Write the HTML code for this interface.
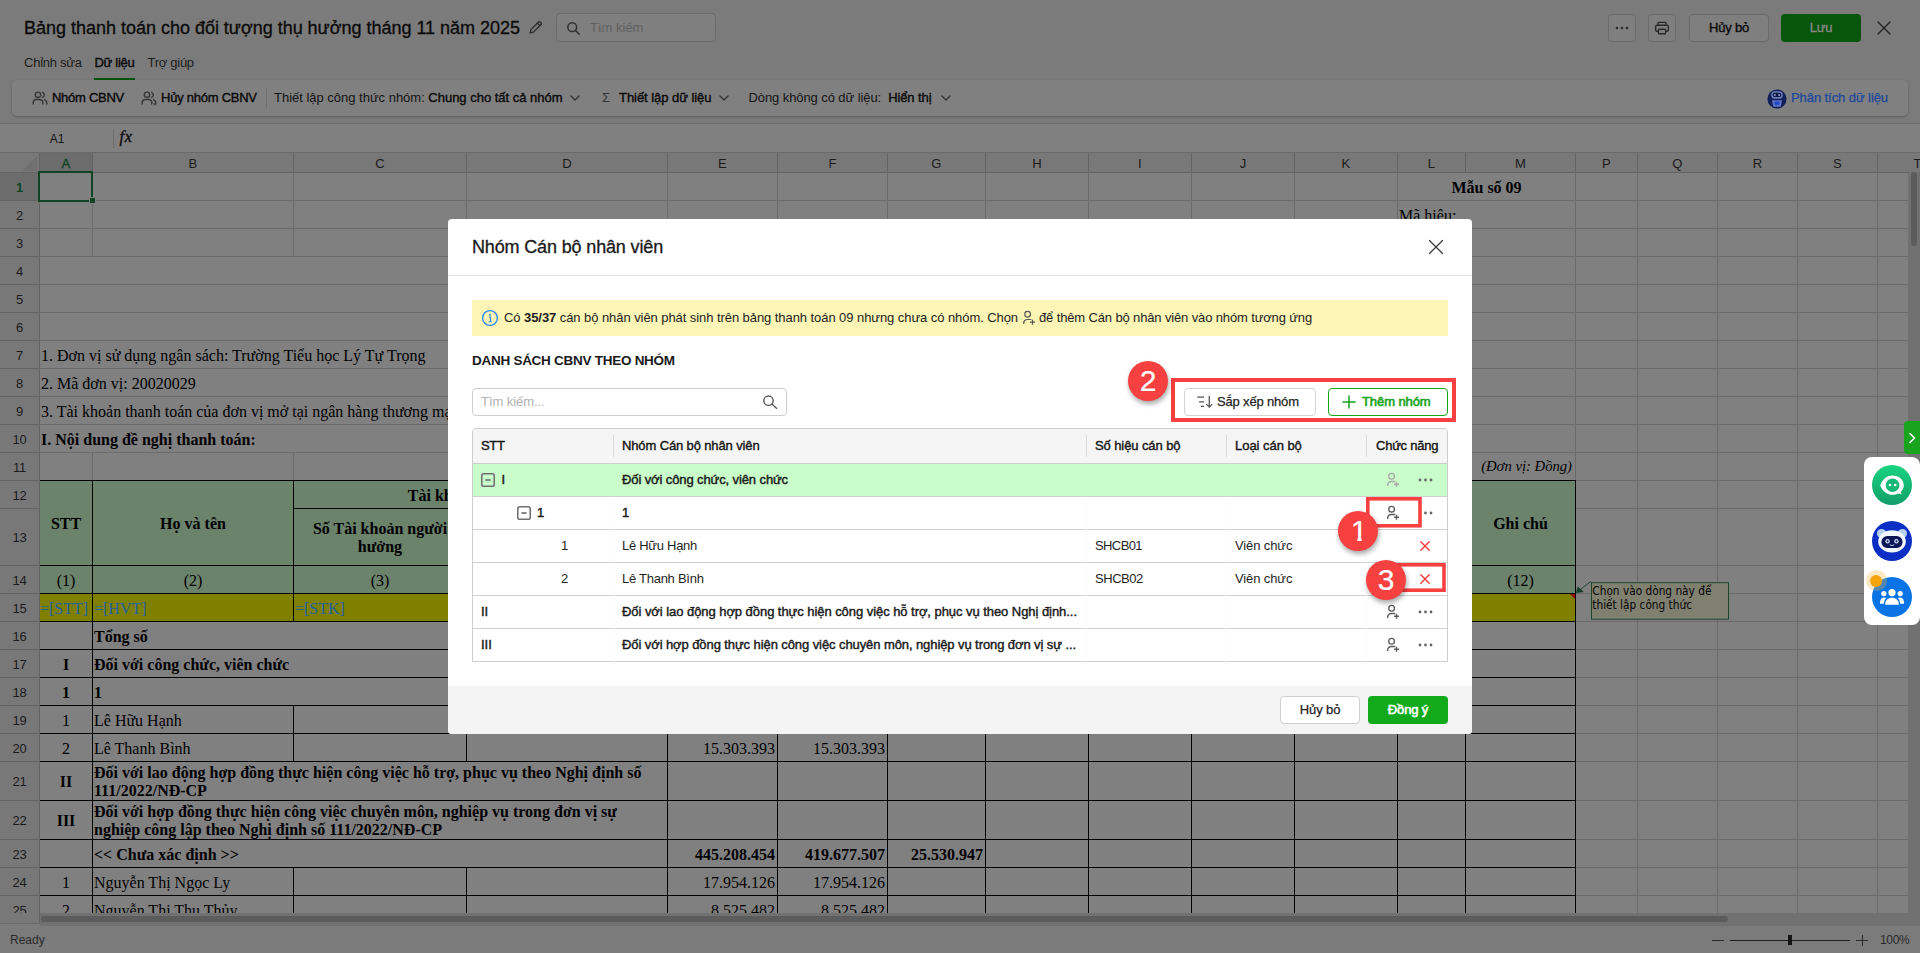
<!DOCTYPE html>
<html lang="vi"><head><meta charset="utf-8"><title>Bảng thanh toán</title><style>
html,body{margin:0;padding:0;}
body{width:1920px;height:953px;overflow:hidden;background:#7b7b7b;font-family:"Liberation Sans",sans-serif;position:relative;}
div,svg{position:absolute;}
.a{position:absolute;}
.t{position:absolute;white-space:nowrap;}
span,i,b{position:static;}
</style></head><body>
<div class="t" id="title" style="left:24px;top:16px;font-size:18px;line-height:24px;color:#0a0a0a;-webkit-text-stroke:0.3px #0a0a0a;letter-spacing:-0.013px;">Bảng thanh toán cho đối tượng thụ hưởng tháng 11 năm 2025</div>
<svg class="a" style="left:528px;top:19px" width="16" height="16" viewBox="0 0 16 16" fill="none" stroke="#2b2b2b" stroke-width="1.3" stroke-linejoin="round" stroke-linecap="round"><path d="M2.2 13.8l.7-3.2 7.6-7.6a1.2 1.2 0 0 1 1.7 0l.8.8a1.2 1.2 0 0 1 0 1.7l-7.6 7.6z"/><path d="M9.4 4.1l2.5 2.5"/></svg>
<div style="left:556px;top:13px;width:158px;height:27px;border:1px solid #6b6b6b;border-radius:4px;background:#7f7f7f;"></div>
<svg class="a" style="left:566px;top:20.5px" width="15" height="15" viewBox="0 0 15 15" fill="none" stroke="#2f2f2f" stroke-width="1.5" stroke-linecap="round"><circle cx="6.2" cy="6.2" r="4.4"/><path d="M9.6 9.6l3.6 3.6"/></svg>
<div class="t" id="srch" style="left:590px;top:20px;font-size:13px;line-height:16px;color:#616161;">Tìm kiếm</div>
<div class="t" id="tab1" style="left:24px;top:55px;font-size:13px;line-height:16px;color:#1c1c1c;letter-spacing:-0.246px;">Chỉnh sửa</div>
<div class="t" id="tab2" style="left:94.5px;top:55px;font-size:13px;line-height:16px;color:#0a0a0a;-webkit-text-stroke:0.38px #0a0a0a;letter-spacing:-0.279px;">Dữ liệu</div>
<div class="t" id="tab3" style="left:147.5px;top:55px;font-size:13px;line-height:16px;color:#1c1c1c;letter-spacing:-0.277px;">Trợ giúp</div>
<div style="left:94px;top:78px;width:41px;height:2px;background:#07550b;"></div>
<div style="left:1608px;top:14px;width:26px;height:26px;border:1px solid #6b6b6b;border-radius:4px;background:#7f7f7f;"></div>
<svg class="a" style="left:1614px;top:25px" width="16" height="6" viewBox="0 0 16 6" fill="#2b2b2b"><circle cx="3" cy="3" r="1.3"/><circle cx="8" cy="3" r="1.3"/><circle cx="13" cy="3" r="1.3"/></svg>
<div style="left:1648px;top:14px;width:26px;height:26px;border:1px solid #6b6b6b;border-radius:4px;background:#7f7f7f;"></div>
<svg class="a" style="left:1654px;top:20px" width="16" height="16" viewBox="0 0 16 16" fill="none" stroke="#2b2b2b" stroke-width="1.4" stroke-linejoin="round"><path d="M4.2 5.2V2.4h7.6v2.8"/><rect x="1.6" y="5.2" width="12.8" height="6.2" rx="1.6"/><rect x="4.4" y="9.2" width="7.2" height="4.6" rx="0.8" fill="#7f7f7f"/></svg>
<div style="left:1689px;top:14px;width:78px;height:26px;border:1px solid #6b6b6b;border-radius:4px;background:#7f7f7f;"></div>
<div class="t" id="huy1" style="left:1689px;top:20px;width:80px;text-align:center;font-size:13px;line-height:16px;color:#0a0a0a;-webkit-text-stroke:0.38px #0a0a0a;letter-spacing:-0.201px;">Hủy bỏ</div>
<div style="left:1781px;top:14px;width:80px;height:28px;border-radius:4px;background:#08550c;"></div>
<div class="t" id="luu" style="left:1781px;top:20px;width:80px;text-align:center;font-size:13px;line-height:16px;color:#8a8a8a;-webkit-text-stroke:0.3px #8a8a8a;letter-spacing:-0.291px;">Lưu</div>
<svg class="a" style="left:1876px;top:20px" width="16" height="16" viewBox="0 0 16 16" fill="none" stroke="#222" stroke-width="1.4" stroke-linecap="round"><path d="M2 2l12 12M14 2L2 14"/></svg>
<div style="left:12px;top:80px;width:1896px;height:36px;background:#808080;border-radius:5px;box-shadow:0 1px 3px rgba(0,0,0,0.22);"></div>
<svg class="a" style="left:32px;top:90px" width="16" height="16" viewBox="0 0 16 16" fill="none" stroke="#383838" stroke-width="1.45" stroke-linecap="round"><circle cx="6" cy="4.8" r="2.7"/><path d="M1.2 14v-1.2c0-2 1.6-3.4 3.6-3.4h2.4c2 0 3.6 1.4 3.6 3.4V14"/><path d="M10.6 2.3a2.7 2.7 0 0 1 0 5"/><path d="M12.6 9.8c1.3.5 2.2 1.6 2.2 3V14"/></svg>
<div class="t" id="tb1" style="left:52px;top:90px;font-size:13px;line-height:16px;color:#0a0a0a;-webkit-text-stroke:0.38px #0a0a0a;letter-spacing:-0.269px;">Nhóm CBNV</div>
<svg class="a" style="left:141px;top:90px" width="16" height="16" viewBox="0 0 16 16" fill="none" stroke="#383838" stroke-width="1.45" stroke-linecap="round"><circle cx="6" cy="4.8" r="2.7"/><path d="M1.2 14v-1.2c0-2 1.6-3.4 3.6-3.4h2.4c2 0 3.6 1.4 3.6 3.4V14"/><path d="M10.6 2.3a2.7 2.7 0 0 1 0 5"/><path d="M12.6 9.8c1.3.5 2.2 1.6 2.2 3V14"/><path d="M12.8 13.2l2 2M14.8 13.2l-2 2" stroke-width="1"/></svg>
<div class="t" id="tb2" style="left:161px;top:90px;font-size:13px;line-height:16px;color:#0a0a0a;-webkit-text-stroke:0.38px #0a0a0a;letter-spacing:-0.245px;">Hủy nhóm CBNV</div>
<div style="left:266px;top:88px;width:1px;height:21px;background:#727272;"></div>
<div class="t" id="tb3" style="left:274px;top:90px;font-size:13px;line-height:16px;color:#141414;letter-spacing:-0.013px;">Thiết lập công thức nhóm: <span style="-webkit-text-stroke:0.38px #0a0a0a;color:#0a0a0a">Chung cho tất cả nhóm</span></div>
<svg class="a" style="left:569px;top:93px" width="12" height="10" viewBox="0 0 12 10" fill="none" stroke="#333" stroke-width="1.3" stroke-linecap="round" stroke-linejoin="round"><path d="M2 3l4 4 4-4"/></svg>
<div class="t" style="left:602px;top:90px;font-size:13px;line-height:16px;color:#333;">Σ</div>
<div class="t" id="tb4" style="left:619px;top:90px;font-size:13px;line-height:16px;color:#0a0a0a;-webkit-text-stroke:0.38px #0a0a0a;letter-spacing:-0.045px;">Thiết lập dữ liệu</div>
<svg class="a" style="left:718px;top:93px" width="12" height="10" viewBox="0 0 12 10" fill="none" stroke="#333" stroke-width="1.3" stroke-linecap="round" stroke-linejoin="round"><path d="M2 3l4 4 4-4"/></svg>
<div class="t" id="tb5" style="left:748.5px;top:90px;font-size:13px;line-height:16px;color:#141414;letter-spacing:-0.086px;">Dòng không có dữ liệu:&nbsp; <span style="-webkit-text-stroke:0.38px #0a0a0a;color:#0a0a0a">Hiển thị</span></div>
<svg class="a" style="left:940px;top:93px" width="12" height="10" viewBox="0 0 12 10" fill="none" stroke="#333" stroke-width="1.3" stroke-linecap="round" stroke-linejoin="round"><path d="M2 3l4 4 4-4"/></svg>
<svg class="a" style="left:1766px;top:88px" width="22" height="22" viewBox="0 0 22 22"><circle cx="11" cy="11" r="9.6" fill="#12205a"/><rect x="5.2" y="3.2" width="11.6" height="7.6" rx="3.6" fill="#6d7fb8"/><rect x="6.6" y="4.8" width="8.8" height="4.2" rx="2.1" fill="#101a4a"/><circle cx="8.9" cy="6.9" r="1" fill="#8a9ad0"/><circle cx="13.1" cy="6.9" r="1" fill="#8a9ad0"/><path d="M6 12.2h10l-1.2 6.6H7.2z" fill="#5d74c4"/><rect x="8.6" y="13.6" width="4.8" height="3.4" rx="1" fill="#1f49c8"/></svg>
<div class="t" id="pt" style="left:1791px;top:90px;font-size:13px;line-height:16px;color:#1b479c;-webkit-text-stroke:0.25px #1b479c;letter-spacing:-0.078px;">Phân tích dữ liệu</div>
<div style="left:0px;top:123px;width:1920px;height:30px;background:#808080;border-top:1px solid #6a6a6a;border-bottom:1px solid #6a6a6a;box-sizing:border-box;"></div>
<div class="t" id="a1" style="left:0px;top:131px;width:114px;text-align:center;font-size:12px;line-height:16px;color:#141414;">A1</div>
<div style="left:113px;top:129px;width:1px;height:19px;background:#6e6e6e;"></div>
<div class="t" id="fx" style="left:119.5px;top:127px;font-family:'Liberation Serif',serif;font-size:16px;line-height:20px;color:#0c0c0c;-webkit-text-stroke:0.4px #0c0c0c;letter-spacing:0.8px;"><i>fx</i></div>
<div class="a" style="left:0;top:153px;width:1920px;height:760px;overflow:hidden;background:#808080">
<div style="left:0px;top:0px;width:1920px;height:19px;background:#787878;"></div>
<div style="left:0px;top:19px;width:39px;height:760px;background:#787878;"></div>
<div style="left:40px;top:0px;width:52px;height:19px;background:#6c6c6c;"></div>
<div style="left:0px;top:20px;width:39px;height:27px;background:#6c6c6c;"></div>
<svg class="a" style="left:22px;top:3px" width="15" height="15" viewBox="0 0 15 15"><path d="M15 0V15H0z" fill="#707070"/></svg>
<div style="left:40px;top:328px;width:1535px;height:112px;background:#6b826b;"></div>
<div style="left:40px;top:441px;width:1535px;height:27px;background:#808000;"></div>
<div style="left:0px;top:19px;width:39px;height:1px;background:#636363;"></div>
<div style="left:39px;top:19px;width:1900px;height:1px;background:#636363;"></div>
<div style="left:0px;top:47px;width:39px;height:1px;background:#636363;"></div>
<div style="left:39px;top:47px;width:1900px;height:1px;background:#6b6b6b;"></div>
<div style="left:0px;top:75px;width:39px;height:1px;background:#636363;"></div>
<div style="left:39px;top:75px;width:1900px;height:1px;background:#6b6b6b;"></div>
<div style="left:0px;top:103px;width:39px;height:1px;background:#636363;"></div>
<div style="left:39px;top:103px;width:1900px;height:1px;background:#6b6b6b;"></div>
<div style="left:0px;top:131px;width:39px;height:1px;background:#636363;"></div>
<div style="left:39px;top:131px;width:1900px;height:1px;background:#6b6b6b;"></div>
<div style="left:0px;top:159px;width:39px;height:1px;background:#636363;"></div>
<div style="left:39px;top:159px;width:1900px;height:1px;background:#6b6b6b;"></div>
<div style="left:0px;top:187px;width:39px;height:1px;background:#636363;"></div>
<div style="left:39px;top:187px;width:1900px;height:1px;background:#6b6b6b;"></div>
<div style="left:0px;top:215px;width:39px;height:1px;background:#636363;"></div>
<div style="left:39px;top:215px;width:1900px;height:1px;background:#6b6b6b;"></div>
<div style="left:0px;top:243px;width:39px;height:1px;background:#636363;"></div>
<div style="left:39px;top:243px;width:1900px;height:1px;background:#6b6b6b;"></div>
<div style="left:0px;top:271px;width:39px;height:1px;background:#636363;"></div>
<div style="left:39px;top:271px;width:1900px;height:1px;background:#6b6b6b;"></div>
<div style="left:0px;top:299px;width:39px;height:1px;background:#636363;"></div>
<div style="left:39px;top:299px;width:1900px;height:1px;background:#6b6b6b;"></div>
<div style="left:0px;top:327px;width:39px;height:1px;background:#636363;"></div>
<div style="left:39px;top:327px;width:1900px;height:1px;background:#6b6b6b;"></div>
<div style="left:0px;top:355px;width:39px;height:1px;background:#636363;"></div>
<div style="left:1575px;top:355px;width:400px;height:1px;background:#6b6b6b;"></div>
<div style="left:0px;top:412px;width:39px;height:1px;background:#636363;"></div>
<div style="left:39px;top:412px;width:1900px;height:1px;background:#6b6b6b;"></div>
<div style="left:0px;top:440px;width:39px;height:1px;background:#636363;"></div>
<div style="left:39px;top:440px;width:1900px;height:1px;background:#6b6b6b;"></div>
<div style="left:0px;top:468px;width:39px;height:1px;background:#636363;"></div>
<div style="left:39px;top:468px;width:1900px;height:1px;background:#6b6b6b;"></div>
<div style="left:0px;top:496px;width:39px;height:1px;background:#636363;"></div>
<div style="left:39px;top:496px;width:1900px;height:1px;background:#6b6b6b;"></div>
<div style="left:0px;top:524px;width:39px;height:1px;background:#636363;"></div>
<div style="left:39px;top:524px;width:1900px;height:1px;background:#6b6b6b;"></div>
<div style="left:0px;top:552px;width:39px;height:1px;background:#636363;"></div>
<div style="left:39px;top:552px;width:1900px;height:1px;background:#6b6b6b;"></div>
<div style="left:0px;top:580px;width:39px;height:1px;background:#636363;"></div>
<div style="left:39px;top:580px;width:1900px;height:1px;background:#6b6b6b;"></div>
<div style="left:0px;top:608px;width:39px;height:1px;background:#636363;"></div>
<div style="left:39px;top:608px;width:1900px;height:1px;background:#6b6b6b;"></div>
<div style="left:0px;top:647px;width:39px;height:1px;background:#636363;"></div>
<div style="left:39px;top:647px;width:1900px;height:1px;background:#6b6b6b;"></div>
<div style="left:0px;top:686px;width:39px;height:1px;background:#636363;"></div>
<div style="left:39px;top:686px;width:1900px;height:1px;background:#6b6b6b;"></div>
<div style="left:0px;top:714px;width:39px;height:1px;background:#636363;"></div>
<div style="left:39px;top:714px;width:1900px;height:1px;background:#6b6b6b;"></div>
<div style="left:0px;top:742px;width:39px;height:1px;background:#636363;"></div>
<div style="left:39px;top:742px;width:1900px;height:1px;background:#6b6b6b;"></div>
<div style="left:0px;top:770px;width:39px;height:1px;background:#636363;"></div>
<div style="left:39px;top:770px;width:1900px;height:1px;background:#6b6b6b;"></div>
<div style="left:39px;top:0px;width:1px;height:19px;background:#636363;"></div>
<div style="left:92px;top:0px;width:1px;height:19px;background:#636363;"></div>
<div style="left:293px;top:0px;width:1px;height:19px;background:#636363;"></div>
<div style="left:466px;top:0px;width:1px;height:19px;background:#636363;"></div>
<div style="left:667px;top:0px;width:1px;height:19px;background:#636363;"></div>
<div style="left:777px;top:0px;width:1px;height:19px;background:#636363;"></div>
<div style="left:887px;top:0px;width:1px;height:19px;background:#636363;"></div>
<div style="left:985px;top:0px;width:1px;height:19px;background:#636363;"></div>
<div style="left:1088px;top:0px;width:1px;height:19px;background:#636363;"></div>
<div style="left:1191px;top:0px;width:1px;height:19px;background:#636363;"></div>
<div style="left:1294px;top:0px;width:1px;height:19px;background:#636363;"></div>
<div style="left:1397px;top:0px;width:1px;height:19px;background:#636363;"></div>
<div style="left:1465px;top:0px;width:1px;height:19px;background:#636363;"></div>
<div style="left:1575px;top:0px;width:1px;height:19px;background:#636363;"></div>
<div style="left:1637px;top:0px;width:1px;height:19px;background:#636363;"></div>
<div style="left:1717px;top:0px;width:1px;height:19px;background:#636363;"></div>
<div style="left:1797px;top:0px;width:1px;height:19px;background:#636363;"></div>
<div style="left:1877px;top:0px;width:1px;height:19px;background:#636363;"></div>
<div style="left:39px;top:19px;width:1px;height:760px;background:#636363;"></div>
<div style="left:1575px;top:19px;width:1px;height:760px;background:#6b6b6b;"></div>
<div style="left:1637px;top:19px;width:1px;height:760px;background:#6b6b6b;"></div>
<div style="left:1717px;top:19px;width:1px;height:760px;background:#6b6b6b;"></div>
<div style="left:1797px;top:19px;width:1px;height:760px;background:#6b6b6b;"></div>
<div style="left:1877px;top:19px;width:1px;height:760px;background:#6b6b6b;"></div>
<div style="left:92px;top:19px;width:1px;height:84px;background:#6b6b6b;"></div>
<div style="left:293px;top:19px;width:1px;height:84px;background:#6b6b6b;"></div>
<div style="left:466px;top:19px;width:1px;height:84px;background:#6b6b6b;"></div>
<div style="left:667px;top:19px;width:1px;height:84px;background:#6b6b6b;"></div>
<div style="left:777px;top:19px;width:1px;height:84px;background:#6b6b6b;"></div>
<div style="left:887px;top:19px;width:1px;height:84px;background:#6b6b6b;"></div>
<div style="left:985px;top:19px;width:1px;height:84px;background:#6b6b6b;"></div>
<div style="left:1088px;top:19px;width:1px;height:84px;background:#6b6b6b;"></div>
<div style="left:1191px;top:19px;width:1px;height:84px;background:#6b6b6b;"></div>
<div style="left:1294px;top:19px;width:1px;height:84px;background:#6b6b6b;"></div>
<div style="left:1397px;top:19px;width:1px;height:84px;background:#6b6b6b;"></div>
<div style="left:1397px;top:19px;width:1px;height:56px;background:#6b6b6b;"></div>
<div style="left:92px;top:299px;width:1px;height:28px;background:#6b6b6b;"></div>
<div style="left:293px;top:299px;width:1px;height:28px;background:#6b6b6b;"></div>
<div class="t" id="colA" style="left:39.4px;top:3px;width:53px;text-align:center;font-size:13px;line-height:16px;color:#1b1b1b;color:#0f4525;-webkit-text-stroke:0.4px #0f4525;">A</div>
<div class="t" id="colB" style="left:92.4px;top:3px;width:201px;text-align:center;font-size:13px;line-height:16px;color:#1b1b1b;">B</div>
<div class="t" style="left:293.4px;top:3px;width:173px;text-align:center;font-size:13px;line-height:16px;color:#1b1b1b;">C</div>
<div class="t" style="left:466.4px;top:3px;width:201px;text-align:center;font-size:13px;line-height:16px;color:#1b1b1b;">D</div>
<div class="t" style="left:667.4px;top:3px;width:110px;text-align:center;font-size:13px;line-height:16px;color:#1b1b1b;">E</div>
<div class="t" style="left:777.4px;top:3px;width:110px;text-align:center;font-size:13px;line-height:16px;color:#1b1b1b;">F</div>
<div class="t" style="left:887.4px;top:3px;width:98px;text-align:center;font-size:13px;line-height:16px;color:#1b1b1b;">G</div>
<div class="t" style="left:985.4px;top:3px;width:103px;text-align:center;font-size:13px;line-height:16px;color:#1b1b1b;">H</div>
<div class="t" style="left:1088.4px;top:3px;width:103px;text-align:center;font-size:13px;line-height:16px;color:#1b1b1b;">I</div>
<div class="t" style="left:1191.4px;top:3px;width:103px;text-align:center;font-size:13px;line-height:16px;color:#1b1b1b;">J</div>
<div class="t" style="left:1294.4px;top:3px;width:103px;text-align:center;font-size:13px;line-height:16px;color:#1b1b1b;">K</div>
<div class="t" style="left:1397.4px;top:3px;width:68px;text-align:center;font-size:13px;line-height:16px;color:#1b1b1b;">L</div>
<div class="t" style="left:1465.4px;top:3px;width:110px;text-align:center;font-size:13px;line-height:16px;color:#1b1b1b;">M</div>
<div class="t" style="left:1575.4px;top:3px;width:62px;text-align:center;font-size:13px;line-height:16px;color:#1b1b1b;">P</div>
<div class="t" style="left:1637.4px;top:3px;width:80px;text-align:center;font-size:13px;line-height:16px;color:#1b1b1b;">Q</div>
<div class="t" style="left:1717.4px;top:3px;width:80px;text-align:center;font-size:13px;line-height:16px;color:#1b1b1b;">R</div>
<div class="t" style="left:1797.4px;top:3px;width:80px;text-align:center;font-size:13px;line-height:16px;color:#1b1b1b;">S</div>
<div class="t" id="colT" style="left:1877.4px;top:3px;width:80px;text-align:center;font-size:13px;line-height:16px;color:#1b1b1b;">T</div>
<div class="t" id="rn1" style="left:0px;top:26.5px;width:39px;text-align:center;font-size:13px;line-height:16px;color:#1b1b1b;letter-spacing:-0.2px;color:#0f4525;font-weight:bold;">1</div>
<div class="t" style="left:0px;top:54.5px;width:39px;text-align:center;font-size:13px;line-height:16px;color:#1b1b1b;letter-spacing:-0.2px;">2</div>
<div class="t" style="left:0px;top:82.5px;width:39px;text-align:center;font-size:13px;line-height:16px;color:#1b1b1b;letter-spacing:-0.2px;">3</div>
<div class="t" style="left:0px;top:110.5px;width:39px;text-align:center;font-size:13px;line-height:16px;color:#1b1b1b;letter-spacing:-0.2px;">4</div>
<div class="t" style="left:0px;top:138.5px;width:39px;text-align:center;font-size:13px;line-height:16px;color:#1b1b1b;letter-spacing:-0.2px;">5</div>
<div class="t" style="left:0px;top:166.5px;width:39px;text-align:center;font-size:13px;line-height:16px;color:#1b1b1b;letter-spacing:-0.2px;">6</div>
<div class="t" style="left:0px;top:194.5px;width:39px;text-align:center;font-size:13px;line-height:16px;color:#1b1b1b;letter-spacing:-0.2px;">7</div>
<div class="t" style="left:0px;top:222.5px;width:39px;text-align:center;font-size:13px;line-height:16px;color:#1b1b1b;letter-spacing:-0.2px;">8</div>
<div class="t" style="left:0px;top:250.5px;width:39px;text-align:center;font-size:13px;line-height:16px;color:#1b1b1b;letter-spacing:-0.2px;">9</div>
<div class="t" style="left:0px;top:278.5px;width:39px;text-align:center;font-size:13px;line-height:16px;color:#1b1b1b;letter-spacing:-0.2px;">10</div>
<div class="t" style="left:0px;top:306.5px;width:39px;text-align:center;font-size:13px;line-height:16px;color:#1b1b1b;letter-spacing:-0.2px;">11</div>
<div class="t" style="left:0px;top:334.5px;width:39px;text-align:center;font-size:13px;line-height:16px;color:#1b1b1b;letter-spacing:-0.2px;">12</div>
<div class="t" id="rn13" style="left:0px;top:377.0px;width:39px;text-align:center;font-size:13px;line-height:16px;color:#1b1b1b;letter-spacing:-0.2px;">13</div>
<div class="t" style="left:0px;top:419.5px;width:39px;text-align:center;font-size:13px;line-height:16px;color:#1b1b1b;letter-spacing:-0.2px;">14</div>
<div class="t" style="left:0px;top:447.5px;width:39px;text-align:center;font-size:13px;line-height:16px;color:#1b1b1b;letter-spacing:-0.2px;">15</div>
<div class="t" style="left:0px;top:475.5px;width:39px;text-align:center;font-size:13px;line-height:16px;color:#1b1b1b;letter-spacing:-0.2px;">16</div>
<div class="t" style="left:0px;top:503.5px;width:39px;text-align:center;font-size:13px;line-height:16px;color:#1b1b1b;letter-spacing:-0.2px;">17</div>
<div class="t" style="left:0px;top:531.5px;width:39px;text-align:center;font-size:13px;line-height:16px;color:#1b1b1b;letter-spacing:-0.2px;">18</div>
<div class="t" style="left:0px;top:559.5px;width:39px;text-align:center;font-size:13px;line-height:16px;color:#1b1b1b;letter-spacing:-0.2px;">19</div>
<div class="t" style="left:0px;top:587.5px;width:39px;text-align:center;font-size:13px;line-height:16px;color:#1b1b1b;letter-spacing:-0.2px;">20</div>
<div class="t" style="left:0px;top:621.0px;width:39px;text-align:center;font-size:13px;line-height:16px;color:#1b1b1b;letter-spacing:-0.2px;">21</div>
<div class="t" style="left:0px;top:660.0px;width:39px;text-align:center;font-size:13px;line-height:16px;color:#1b1b1b;letter-spacing:-0.2px;">22</div>
<div class="t" style="left:0px;top:693.5px;width:39px;text-align:center;font-size:13px;line-height:16px;color:#1b1b1b;letter-spacing:-0.2px;">23</div>
<div class="t" style="left:0px;top:721.5px;width:39px;text-align:center;font-size:13px;line-height:16px;color:#1b1b1b;letter-spacing:-0.2px;">24</div>
<div class="t" id="rn25" style="left:0px;top:749.5px;width:39px;text-align:center;font-size:13px;line-height:16px;color:#1b1b1b;letter-spacing:-0.2px;">25</div>
<div style="left:40px;top:327px;width:1536px;height:1px;background:#000;"></div>
<div style="left:293px;top:355px;width:1172px;height:1px;background:#000;"></div>
<div style="left:40px;top:412px;width:1536px;height:1px;background:#000;"></div>
<div style="left:40px;top:440px;width:1536px;height:1px;background:#000;"></div>
<div style="left:40px;top:468px;width:1536px;height:1px;background:#000;"></div>
<div style="left:40px;top:496px;width:1536px;height:1px;background:#000;"></div>
<div style="left:40px;top:524px;width:1536px;height:1px;background:#000;"></div>
<div style="left:40px;top:552px;width:1536px;height:1px;background:#000;"></div>
<div style="left:40px;top:580px;width:1536px;height:1px;background:#000;"></div>
<div style="left:40px;top:608px;width:1536px;height:1px;background:#000;"></div>
<div style="left:40px;top:647px;width:1536px;height:1px;background:#000;"></div>
<div style="left:40px;top:686px;width:1536px;height:1px;background:#000;"></div>
<div style="left:40px;top:714px;width:1536px;height:1px;background:#000;"></div>
<div style="left:40px;top:742px;width:1536px;height:1px;background:#000;"></div>
<div style="left:40px;top:770px;width:1536px;height:1px;background:#000;"></div>
<div style="left:92px;top:327px;width:1px;height:460px;background:#000;"></div>
<div style="left:667px;top:327px;width:1px;height:460px;background:#000;"></div>
<div style="left:777px;top:327px;width:1px;height:460px;background:#000;"></div>
<div style="left:887px;top:327px;width:1px;height:460px;background:#000;"></div>
<div style="left:985px;top:327px;width:1px;height:460px;background:#000;"></div>
<div style="left:1088px;top:327px;width:1px;height:460px;background:#000;"></div>
<div style="left:1191px;top:327px;width:1px;height:460px;background:#000;"></div>
<div style="left:1294px;top:327px;width:1px;height:460px;background:#000;"></div>
<div style="left:1397px;top:327px;width:1px;height:460px;background:#000;"></div>
<div style="left:1465px;top:327px;width:1px;height:460px;background:#000;"></div>
<div style="left:1575px;top:327px;width:1px;height:460px;background:#000;"></div>
<div style="left:293px;top:327px;width:1px;height:141px;background:#000;"></div>
<div style="left:466px;top:355px;width:1px;height:113px;background:#000;"></div>
<div style="left:293px;top:552px;width:1px;height:56px;background:#000;"></div>
<div style="left:466px;top:552px;width:1px;height:56px;background:#000;"></div>
<div style="left:293px;top:714px;width:1px;height:63px;background:#000;"></div>
<div style="left:466px;top:714px;width:1px;height:63px;background:#000;"></div>
<div style="left:38px;top:18px;width:55px;height:31px;border:2px solid #0f4525;box-sizing:border-box;"></div>
<div style="left:90px;top:45px;width:5px;height:5px;background:#0f4525;border:1px solid #808080;box-sizing:content-box;margin:-1px;"></div>
<div class="a" id="mau" style="left:1398px;top:20px;width:177px;height:27px;display:flex;align-items:center;justify-content:center;"><span style="font-family:'Liberation Serif', serif;font-size:16px;line-height:18px;color:#000;white-space:nowrap;position:relative;top:1px;font-weight:bold;">Mẫu số 09</span></div>
<div class="a" id="mahieu" style="left:1398px;top:48px;width:177px;height:27px;display:flex;align-items:center;justify-content:flex-start;"><span style="font-family:'Liberation Serif', serif;font-size:16px;line-height:18px;color:#000;white-space:nowrap;position:relative;top:1px;padding-left:1px;">Mã hiệu:</span></div>
<div class="a" id="r7" style="left:40px;top:188px;width:1535px;height:27px;display:flex;align-items:center;justify-content:flex-start;"><span style="font-family:'Liberation Serif', serif;font-size:16px;line-height:18px;color:#000;white-space:nowrap;position:relative;top:1px;padding-left:1px;">1. Đơn vị sử dụng ngân sách: Trường Tiểu học Lý Tự Trọng</span></div>
<div class="a" id="r8" style="left:40px;top:216px;width:1535px;height:27px;display:flex;align-items:center;justify-content:flex-start;"><span style="font-family:'Liberation Serif', serif;font-size:16px;line-height:18px;color:#000;white-space:nowrap;position:relative;top:1px;padding-left:1px;">2. Mã đơn vị: 20020029</span></div>
<div class="a" id="r9" style="left:40px;top:244px;width:1535px;height:27px;display:flex;align-items:center;justify-content:flex-start;"><span style="font-family:'Liberation Serif', serif;font-size:16px;line-height:18px;color:#000;white-space:nowrap;position:relative;top:1px;padding-left:1px;">3. Tài khoản thanh toán của đơn vị mở tại ngân hàng thương mại:</span></div>
<div class="a" id="r10" style="left:40px;top:272px;width:1535px;height:27px;display:flex;align-items:center;justify-content:flex-start;"><span style="font-family:'Liberation Serif', serif;font-size:16px;line-height:18px;color:#000;white-space:nowrap;position:relative;top:1px;font-weight:bold;padding-left:1px;">I. Nội dung đề nghị thanh toán:</span></div>
<div class="a" id="dv" style="left:1295px;top:300px;width:280px;height:27px;display:flex;align-items:center;justify-content:flex-end;"><span style="font-family:'Liberation Serif', serif;font-size:16px;line-height:18px;color:#000;white-space:nowrap;position:relative;top:1px;padding-right:3px;font-size:14.67px;top:-0.5px;"><i>(Đơn vị: Đồng)</i></span></div>
<div class="a" id="stt" style="left:40px;top:328px;width:52px;height:84px;display:flex;align-items:center;justify-content:center;"><span style="font-family:'Liberation Serif', serif;font-size:16px;line-height:18px;color:#000;white-space:nowrap;position:relative;top:1px;font-weight:bold;">STT</span></div>
<div class="a" id="hvt" style="left:93px;top:328px;width:200px;height:84px;display:flex;align-items:center;justify-content:center;"><span style="font-family:'Liberation Serif', serif;font-size:16px;line-height:18px;color:#000;white-space:nowrap;position:relative;top:1px;font-weight:bold;">Họ và tên</span></div>
<div class="a" id="tk" style="left:294px;top:328px;width:373px;height:27px;display:flex;align-items:center;justify-content:center;"><span style="font-family:'Liberation Serif', serif;font-size:16px;line-height:18px;color:#000;white-space:nowrap;position:relative;top:1px;font-weight:bold;">Tài khoản ngân hàng</span></div>
<div class="a" id="stk" style="left:294px;top:356px;width:172px;height:56px;display:flex;align-items:center;justify-content:center;"><span style="font-family:'Liberation Serif', serif;font-size:16px;line-height:18px;color:#000;white-space:nowrap;position:relative;top:1px;font-weight:bold;white-space:normal;text-align:center;">Số Tài khoản người hưởng</span></div>
<div class="a" id="ghichu" style="left:1466px;top:328px;width:109px;height:84px;display:flex;align-items:center;justify-content:center;"><span style="font-family:'Liberation Serif', serif;font-size:16px;line-height:18px;color:#000;white-space:nowrap;position:relative;top:1px;font-weight:bold;">Ghi chú</span></div>
<div class="a" id="n0" style="left:40px;top:413px;width:52px;height:27px;display:flex;align-items:center;justify-content:center;"><span style="font-family:'Liberation Serif', serif;font-size:16px;line-height:18px;color:#000;white-space:nowrap;position:relative;top:1px;">(1)</span></div>
<div class="a" id="n1" style="left:93px;top:413px;width:200px;height:27px;display:flex;align-items:center;justify-content:center;"><span style="font-family:'Liberation Serif', serif;font-size:16px;line-height:18px;color:#000;white-space:nowrap;position:relative;top:1px;">(2)</span></div>
<div class="a" id="n2" style="left:294px;top:413px;width:172px;height:27px;display:flex;align-items:center;justify-content:center;"><span style="font-family:'Liberation Serif', serif;font-size:16px;line-height:18px;color:#000;white-space:nowrap;position:relative;top:1px;">(3)</span></div>
<div class="a" id="n12" style="left:1466px;top:413px;width:109px;height:27px;display:flex;align-items:center;justify-content:center;"><span style="font-family:'Liberation Serif', serif;font-size:16px;line-height:18px;color:#000;white-space:nowrap;position:relative;top:1px;">(12)</span></div>
<div class="a" id="f1" style="left:40px;top:441px;width:52px;height:27px;display:flex;align-items:center;justify-content:flex-start;"><span style="font-family:'Liberation Serif', serif;font-size:16px;line-height:18px;color:#000;white-space:nowrap;position:relative;top:1px;color:#2462a0;">=[STT]</span></div>
<div class="a" style="left:93px;top:441px;width:200px;height:27px;display:flex;align-items:center;justify-content:flex-start;"><span style="font-family:'Liberation Serif', serif;font-size:16px;line-height:18px;color:#000;white-space:nowrap;position:relative;top:1px;color:#2462a0;padding-left:1px;">=[HVT]</span></div>
<div class="a" style="left:294px;top:441px;width:172px;height:27px;display:flex;align-items:center;justify-content:flex-start;"><span style="font-family:'Liberation Serif', serif;font-size:16px;line-height:18px;color:#000;white-space:nowrap;position:relative;top:1px;color:#2462a0;padding-left:1px;">=[STK]</span></div>
<div class="a" style="left:93px;top:469px;width:574px;height:27px;display:flex;align-items:center;justify-content:flex-start;"><span style="font-family:'Liberation Serif', serif;font-size:16px;line-height:18px;color:#000;white-space:nowrap;position:relative;top:1px;font-weight:bold;padding-left:1px;">Tổng số</span></div>
<div class="a" style="left:40px;top:497px;width:52px;height:27px;display:flex;align-items:center;justify-content:center;"><span style="font-family:'Liberation Serif', serif;font-size:16px;line-height:18px;color:#000;white-space:nowrap;position:relative;top:1px;font-weight:bold;">I</span></div>
<div class="a" id="r17" style="left:93px;top:497px;width:574px;height:27px;display:flex;align-items:center;justify-content:flex-start;"><span style="font-family:'Liberation Serif', serif;font-size:16px;line-height:18px;color:#000;white-space:nowrap;position:relative;top:1px;font-weight:bold;padding-left:1px;">Đối với công chức, viên chức</span></div>
<div class="a" style="left:40px;top:525px;width:52px;height:27px;display:flex;align-items:center;justify-content:center;"><span style="font-family:'Liberation Serif', serif;font-size:16px;line-height:18px;color:#000;white-space:nowrap;position:relative;top:1px;font-weight:bold;">1</span></div>
<div class="a" style="left:93px;top:525px;width:574px;height:27px;display:flex;align-items:center;justify-content:flex-start;"><span style="font-family:'Liberation Serif', serif;font-size:16px;line-height:18px;color:#000;white-space:nowrap;position:relative;top:1px;font-weight:bold;padding-left:1px;">1</span></div>
<div class="a" style="left:40px;top:553px;width:52px;height:27px;display:flex;align-items:center;justify-content:center;"><span style="font-family:'Liberation Serif', serif;font-size:16px;line-height:18px;color:#000;white-space:nowrap;position:relative;top:1px;">1</span></div>
<div class="a" id="r19" style="left:93px;top:553px;width:200px;height:27px;display:flex;align-items:center;justify-content:flex-start;"><span style="font-family:'Liberation Serif', serif;font-size:16px;line-height:18px;color:#000;white-space:nowrap;position:relative;top:1px;padding-left:1px;">Lê Hữu Hạnh</span></div>
<div class="a" style="left:40px;top:581px;width:52px;height:27px;display:flex;align-items:center;justify-content:center;"><span style="font-family:'Liberation Serif', serif;font-size:16px;line-height:18px;color:#000;white-space:nowrap;position:relative;top:1px;">2</span></div>
<div class="a" style="left:93px;top:581px;width:200px;height:27px;display:flex;align-items:center;justify-content:flex-start;"><span style="font-family:'Liberation Serif', serif;font-size:16px;line-height:18px;color:#000;white-space:nowrap;position:relative;top:1px;padding-left:1px;">Lê Thanh Bình</span></div>
<div class="a" id="e20" style="left:668px;top:581px;width:109px;height:27px;display:flex;align-items:center;justify-content:flex-end;"><span style="font-family:'Liberation Serif', serif;font-size:16px;line-height:18px;color:#000;white-space:nowrap;position:relative;top:1px;padding-right:2px;">15.303.393</span></div>
<div class="a" style="left:778px;top:581px;width:109px;height:27px;display:flex;align-items:center;justify-content:flex-end;"><span style="font-family:'Liberation Serif', serif;font-size:16px;line-height:18px;color:#000;white-space:nowrap;position:relative;top:1px;padding-right:2px;">15.303.393</span></div>
<div class="a" style="left:40px;top:609px;width:52px;height:38px;display:flex;align-items:center;justify-content:center;"><span style="font-family:'Liberation Serif', serif;font-size:16px;line-height:18px;color:#000;white-space:nowrap;position:relative;top:1px;font-weight:bold;">II</span></div>
<div class="a" id="r21" style="left:93px;top:609px;width:574px;height:38px;display:flex;align-items:center;justify-content:flex-start;"><span style="font-family:'Liberation Serif', serif;font-size:16px;line-height:18px;color:#000;white-space:nowrap;position:relative;top:1px;font-weight:bold;white-space:normal;text-align:left;padding-left:1px;">Đối với lao động hợp đồng thực hiện công việc hỗ trợ, phục vụ theo Nghị định số 111/2022/NĐ-CP</span></div>
<div class="a" style="left:40px;top:648px;width:52px;height:38px;display:flex;align-items:center;justify-content:center;"><span style="font-family:'Liberation Serif', serif;font-size:16px;line-height:18px;color:#000;white-space:nowrap;position:relative;top:1px;font-weight:bold;">III</span></div>
<div class="a" id="r22" style="left:93px;top:648px;width:574px;height:38px;display:flex;align-items:center;justify-content:flex-start;"><span style="font-family:'Liberation Serif', serif;font-size:16px;line-height:18px;color:#000;white-space:nowrap;position:relative;top:1px;font-weight:bold;white-space:normal;text-align:left;padding-left:1px;">Đối với hợp đồng thực hiện công việc chuyên môn, nghiệp vụ trong đơn vị sự nghiệp công lập theo Nghị định số 111/2022/NĐ-CP</span></div>
<div class="a" id="r23" style="left:93px;top:687px;width:574px;height:27px;display:flex;align-items:center;justify-content:flex-start;"><span style="font-family:'Liberation Serif', serif;font-size:16px;line-height:18px;color:#000;white-space:nowrap;position:relative;top:1px;font-weight:bold;padding-left:1px;">&lt;&lt; Chưa xác định &gt;&gt;</span></div>
<div class="a" id="e23" style="left:668px;top:687px;width:109px;height:27px;display:flex;align-items:center;justify-content:flex-end;"><span style="font-family:'Liberation Serif', serif;font-size:16px;line-height:18px;color:#000;white-space:nowrap;position:relative;top:1px;font-weight:bold;padding-right:2px;">445.208.454</span></div>
<div class="a" style="left:778px;top:687px;width:109px;height:27px;display:flex;align-items:center;justify-content:flex-end;"><span style="font-family:'Liberation Serif', serif;font-size:16px;line-height:18px;color:#000;white-space:nowrap;position:relative;top:1px;font-weight:bold;padding-right:2px;">419.677.507</span></div>
<div class="a" style="left:888px;top:687px;width:97px;height:27px;display:flex;align-items:center;justify-content:flex-end;"><span style="font-family:'Liberation Serif', serif;font-size:16px;line-height:18px;color:#000;white-space:nowrap;position:relative;top:1px;font-weight:bold;padding-right:2px;">25.530.947</span></div>
<div class="a" style="left:40px;top:715px;width:52px;height:27px;display:flex;align-items:center;justify-content:center;"><span style="font-family:'Liberation Serif', serif;font-size:16px;line-height:18px;color:#000;white-space:nowrap;position:relative;top:1px;">1</span></div>
<div class="a" id="r24" style="left:93px;top:715px;width:200px;height:27px;display:flex;align-items:center;justify-content:flex-start;"><span style="font-family:'Liberation Serif', serif;font-size:16px;line-height:18px;color:#000;white-space:nowrap;position:relative;top:1px;padding-left:1px;">Nguyễn Thị Ngọc Ly</span></div>
<div class="a" style="left:668px;top:715px;width:109px;height:27px;display:flex;align-items:center;justify-content:flex-end;"><span style="font-family:'Liberation Serif', serif;font-size:16px;line-height:18px;color:#000;white-space:nowrap;position:relative;top:1px;padding-right:2px;">17.954.126</span></div>
<div class="a" style="left:778px;top:715px;width:109px;height:27px;display:flex;align-items:center;justify-content:flex-end;"><span style="font-family:'Liberation Serif', serif;font-size:16px;line-height:18px;color:#000;white-space:nowrap;position:relative;top:1px;padding-right:2px;">17.954.126</span></div>
<div class="a" style="left:40px;top:743px;width:52px;height:27px;display:flex;align-items:center;justify-content:center;"><span style="font-family:'Liberation Serif', serif;font-size:16px;line-height:18px;color:#000;white-space:nowrap;position:relative;top:1px;">2</span></div>
<div class="a" style="left:93px;top:743px;width:200px;height:27px;display:flex;align-items:center;justify-content:flex-start;"><span style="font-family:'Liberation Serif', serif;font-size:16px;line-height:18px;color:#000;white-space:nowrap;position:relative;top:1px;padding-left:1px;">Nguyễn Thị Thu Thủy</span></div>
<div class="a" style="left:668px;top:743px;width:109px;height:27px;display:flex;align-items:center;justify-content:flex-end;"><span style="font-family:'Liberation Serif', serif;font-size:16px;line-height:18px;color:#000;white-space:nowrap;position:relative;top:1px;padding-right:2px;">8.525.482</span></div>
<div class="a" style="left:778px;top:743px;width:109px;height:27px;display:flex;align-items:center;justify-content:flex-end;"><span style="font-family:'Liberation Serif', serif;font-size:16px;line-height:18px;color:#000;white-space:nowrap;position:relative;top:1px;padding-right:2px;">8.525.482</span></div>
<svg class="a" style="left:1570px;top:441px" width="5" height="5" viewBox="0 0 5 5"><path d="M0 0H5V5z" fill="#8e0e0e"/></svg>
<svg class="a" style="left:1574px;top:428px" width="22" height="16" viewBox="0 0 22 16"><path d="M16.9 0.4L4 10.4" stroke="#123f29" stroke-width="0.9" fill="none"/><path d="M1.9 12L3.8 5.4L9.9 11z" fill="#123f29"/></svg>
<svg class="a" style="left:1591px;top:429px" width="139" height="38" viewBox="0 0 139 38"><rect x="0.5" y="0.7" width="137" height="36.5" fill="#808070" stroke="#123f29" stroke-width="0.9"/></svg>
<div class="t" id="cmt" style="left:1592.3px;top:432px;font-family:'DejaVu Sans Condensed','DejaVu Sans',sans-serif;font-size:11.75px;line-height:13.6px;color:#050505;">Chọn vào dòng này để<br>thiết lập công thức</div>
</div>
<div style="left:1908px;top:172px;width:12px;height:754px;background:#717171;"></div>
<div style="left:1911px;top:172px;width:6px;height:74px;background:#5c5c5c;border-radius:4px;"></div>
<div style="left:40px;top:913px;width:1868px;height:13px;background:#717171;"></div>
<div style="left:0px;top:913px;width:39px;height:10px;background:#787878;border-bottom:1px solid #6a6a6a;border-right:1px solid #636363;"></div>
<div style="left:41px;top:916px;width:1687px;height:6px;background:#5c5c5c;border-radius:3px;"></div>
<div class="t" id="ready" style="left:10px;top:933px;font-size:12px;line-height:14px;color:#2a2a2a;">Ready</div>
<div style="left:1712px;top:940px;width:12px;height:1px;background:#2a2a2a;"></div>
<div style="left:1730px;top:940px;width:120px;height:1px;background:#1c1c1c;"></div>
<div style="left:1788px;top:935px;width:4px;height:10px;background:#141414;"></div>
<div style="left:1856px;top:940px;width:12px;height:1px;background:#2a2a2a;"></div>
<div style="left:1861.5px;top:935px;width:1px;height:11px;background:#2a2a2a;"></div>
<div class="t" id="pct" style="left:1880px;top:933px;font-size:12px;line-height:14px;color:#2a2a2a;letter-spacing:-0.3px;">100%</div>
<div style="left:1904px;top:421px;width:16px;height:33px;background:#18a41c;border-radius:4px 0 0 4px;"></div>
<svg class="a" style="left:1907px;top:431px" width="10" height="14" viewBox="0 0 10 14" fill="none" stroke="#fff" stroke-width="1.6" stroke-linecap="round" stroke-linejoin="round"><path d="M3 2.5l4.5 4.5L3 11.5"/></svg>
<div style="left:1864px;top:457px;width:56px;height:168px;background:#fff;border-radius:8px;"></div>
<svg class="a" style="left:1872px;top:465px" width="40" height="40" viewBox="0 0 40 40"><defs><linearGradient id="g1" x1="0" y1="0" x2="0" y2="1"><stop offset="0" stop-color="#19d480"/><stop offset="1" stop-color="#129e6b"/></linearGradient></defs><circle cx="20" cy="20" r="20" fill="url(#g1)"/><path d="M8.2 20.4C11 13.5 15.5 10.6 20.5 10.6c6.2 0 11.3 4.2 11.3 9.6 0 2.6-1.2 5-3.2 6.7l1.2 2.3-3.6-.8c-1.7.8-3.6 1.3-5.7 1.3-5 0-9.5-2.9-12.3-9.3z" fill="#fff"/><circle cx="20.6" cy="20.2" r="6.8" fill="#17b877"/><circle cx="18" cy="20" r="1.35" fill="#fff"/><circle cx="23.2" cy="20" r="1.35" fill="#fff"/></svg>
<svg class="a" style="left:1872px;top:521px" width="40" height="40" viewBox="0 0 40 40"><circle cx="20" cy="20" r="20" fill="#0b2fc4"/><circle cx="9.6" cy="12.6" r="4.6" fill="#b8d2f6"/><circle cx="30.4" cy="12.6" r="4.6" fill="#b8d2f6"/><ellipse cx="20" cy="20.4" rx="13.8" ry="11.2" fill="#f2f7ff"/><rect x="9.4" y="15" width="21.2" height="12" rx="6" fill="#0a1456"/><circle cx="15.6" cy="20.2" r="2.2" fill="#cfe0ff"/><circle cx="24.4" cy="20.2" r="2.2" fill="#cfe0ff"/><circle cx="15.6" cy="20.2" r="1" fill="#0a1456"/><circle cx="24.4" cy="20.2" r="1" fill="#0a1456"/><path d="M18 24q2 1.6 4 0" stroke="#cfe0ff" stroke-width="0.9" fill="none" stroke-linecap="round"/></svg>
<svg class="a" style="left:1872px;top:577px" width="40" height="40" viewBox="0 0 40 40"><circle cx="20" cy="20" r="20" fill="#0a74e6"/><g fill="#fff"><circle cx="20" cy="15.6" r="3.6"/><path d="M13.2 27.2c0-4 3-6.4 6.8-6.4s6.8 2.4 6.8 6.4v.6H13.2z"/><circle cx="11.8" cy="16.6" r="2.6"/><path d="M8 25.2c0-3 1.8-4.8 4.2-4.8.8 0 1.5.2 2.1.5-1.5 1.3-2.4 3.2-2.4 5.6v.3H8z"/><circle cx="28.2" cy="16.6" r="2.6"/><path d="M32 25.2c0-3-1.8-4.8-4.2-4.8-.8 0-1.5.2-2.1.5 1.5 1.3 2.4 3.2 2.4 5.6v.3H32z"/></g></svg>
<div style="left:1865.5px;top:570px;width:21px;height:21px;border-radius:50%;background:rgba(250,180,60,0.3);"></div>
<div style="left:1870px;top:574.5px;width:12px;height:12px;border-radius:50%;background:#f6a40c;"></div>
<div class="a" id="modal" style="left:448px;top:219px;width:1024px;height:515px;background:#fff;border-radius:4px;overflow:hidden;">
<div class="t" id="mtitle" style="left:24px;top:16px;font-size:18px;line-height:24px;color:#1a1a1a;-webkit-text-stroke:0.3px currentColor;letter-spacing:-0.149px;">Nhóm Cán bộ nhân viên</div>
<svg class="a" style="left:979px;top:19px" width="18" height="18" viewBox="0 0 18 18" fill="none" stroke="#3a3a3a" stroke-width="1.3" stroke-linecap="round"><path d="M2.5 2.5l13 13M15.5 2.5l-13 13"/></svg>
<div style="left:0px;top:56px;width:1024px;height:1px;background:#e4e4e4;"></div>
<div style="left:24px;top:81px;width:976px;height:36px;background:#fcf5b6;"></div>
<svg class="a" style="left:33px;top:90px" width="18" height="18" viewBox="0 0 18 18" ><circle cx="9" cy="9" r="7.4" fill="none" stroke="#2d8cf6" stroke-width="1.4"/><circle cx="9" cy="5.7" r="1" fill="#2d8cf6"/><path d="M7.9 8.1h1.7v4.5M7.6 12.7h3.2" fill="none" stroke="#2d8cf6" stroke-width="1.1"/></svg>
<div class="t" id="ban1" style="left:56px;top:91px;font-size:13px;line-height:16px;color:#1f1f1f;letter-spacing:-0.068px;">Có <b>35/37</b> cán bộ nhân viên phát sinh trên bảng thanh toán 09 nhưng chưa có nhóm. Chọn</div>
<svg class="a" style="left:573px;top:90.5px" width="16" height="16" viewBox="0 0 16 16" fill="none" stroke="#555" stroke-width="1.2" stroke-linecap="butt"><circle cx="6.6" cy="4.2" r="2.85"/><path d="M2.7 13.9V13a3.5 3.5 0 0 1 3.5-3.5h4.1"/><path d="M11.5 9.7v5M9 12.2h5"/></svg>
<div class="t" id="ban2" style="left:591px;top:91px;font-size:13px;line-height:16px;color:#1f1f1f;letter-spacing:-0.137px;">để thêm Cán bộ nhân viên vào nhóm tương ứng</div>
<div class="t" id="sect" style="left:24px;top:134px;font-size:13.5px;line-height:16px;color:#1a1a1a;font-weight:bold;letter-spacing:-0.269px;">DANH SÁCH CBNV THEO NHÓM</div>
<div style="left:24px;top:169px;width:313px;height:26px;border:1px solid #cfcfcf;border-radius:4px;background:#fff;"></div>
<div class="t" id="msrch" style="left:33px;top:175px;font-size:13px;line-height:16px;color:#b0b0b0;letter-spacing:-0.062px;">Tìm kiếm...</div>
<svg class="a" style="left:314px;top:175px" width="16" height="16" viewBox="0 0 16 16" fill="none" stroke="#555" stroke-width="1.4" stroke-linecap="round"><circle cx="6.5" cy="6.7" r="4.7"/><path d="M9.9 10.1l4.6 4.1"/></svg>
<div style="left:736px;top:169px;width:130px;height:26px;border:1px solid #d3d3d3;border-radius:4px;background:#fff;"></div>
<svg class="a" style="left:748px;top:175px" width="18" height="16" viewBox="0 0 18 16" fill="none" stroke="#555" stroke-linecap="butt" stroke-linejoin="miter"><path d="M1.2 3.1h6.9M3 7.8h5.1M5 12.4h3.1" stroke-width="1.3"/><path d="M13.3 2.1V13M10.4 10.1l2.9 3 2.9-3" stroke-width="1.3"/></svg>
<div class="t" id="sapxep" style="left:769px;top:175px;font-size:13px;line-height:16px;color:#1f1f1f;-webkit-text-stroke:0.25px currentColor;letter-spacing:-0.170px;">Sắp xếp nhóm</div>
<div style="left:880px;top:169px;width:118px;height:26px;border:1px solid #18a41c;border-radius:4px;background:#fff;"></div>
<svg class="a" style="left:893px;top:175px" width="16" height="16" viewBox="0 0 16 16" fill="none" stroke="#18a41c" stroke-width="1.5" stroke-linecap="butt"><path d="M8 1.4v13.2M1.4 8h13.2"/></svg>
<div class="t" id="themnhom" style="left:914px;top:175px;font-size:13px;line-height:16px;color:#18a41c;-webkit-text-stroke:0.6px #18a41c;letter-spacing:-0.086px;">Thêm nhóm</div>
<div style="left:24px;top:209px;width:974px;height:232px;border:1px solid #cdcdcd;border-radius:4px 4px 0 0;background:#fff;"></div>
<div style="left:25px;top:210px;width:974px;height:34px;background:#f5f5f5;border-radius:3px 3px 0 0;"></div>
<div style="left:25px;top:244px;width:974px;height:1px;background:#cdcdcd;"></div>
<div class="t" style="left:33px;top:219px;font-size:13px;line-height:16px;color:#141414;-webkit-text-stroke:0.38px currentColor;letter-spacing:-0.354px;">STT</div>
<div class="t" id="hnhom" style="left:174px;top:219px;font-size:13px;line-height:16px;color:#141414;-webkit-text-stroke:0.38px currentColor;letter-spacing:-0.129px;">Nhóm Cán bộ nhân viên</div>
<div class="t" id="hsohieu" style="left:647px;top:219px;font-size:13px;line-height:16px;color:#141414;-webkit-text-stroke:0.38px currentColor;letter-spacing:-0.095px;">Số hiệu cán bộ</div>
<div class="t" style="left:787px;top:219px;font-size:13px;line-height:16px;color:#141414;-webkit-text-stroke:0.38px currentColor;letter-spacing:-0.039px;">Loại cán bộ</div>
<div class="t" id="hchuc" style="left:928px;top:219px;font-size:13px;line-height:16px;color:#141414;-webkit-text-stroke:0.38px currentColor;letter-spacing:-0.240px;">Chức năng</div>
<div style="left:165px;top:216px;width:1px;height:22px;background:#dcdcdc;"></div>
<div style="left:638px;top:216px;width:1px;height:22px;background:#dcdcdc;"></div>
<div style="left:778px;top:216px;width:1px;height:22px;background:#dcdcdc;"></div>
<div style="left:918px;top:216px;width:1px;height:22px;background:#dcdcdc;"></div>
<div style="left:25px;top:245px;width:974px;height:32px;background:#c9fdc9;"></div>
<div style="left:25px;top:277px;width:974px;height:1px;background:#d0d0d0;"></div>
<div style="left:25px;top:310px;width:974px;height:1px;background:#d0d0d0;"></div>
<div style="left:25px;top:343px;width:974px;height:1px;background:#d0d0d0;"></div>
<div style="left:25px;top:376px;width:974px;height:1px;background:#d0d0d0;"></div>
<div style="left:25px;top:409px;width:974px;height:1px;background:#d0d0d0;"></div>
<div style="left:25px;top:442px;width:974px;height:1px;background:#d0d0d0;"></div>
<div style="left:165px;top:278px;width:1px;height:165px;background:#fbfbfb;"></div>
<div style="left:638px;top:278px;width:1px;height:165px;background:#fbfbfb;"></div>
<div style="left:778px;top:278px;width:1px;height:165px;background:#fbfbfb;"></div>
<div style="left:918px;top:278px;width:1px;height:165px;background:#fbfbfb;"></div>
<svg class="a" style="left:33px;top:254px" width="14" height="14" viewBox="0 0 14 14" ><rect x="0.75" y="0.75" width="12.5" height="12.5" rx="2" fill="none" stroke="#707070" stroke-width="1.6"/><path d="M4.4 7h5.2" stroke="#606060" stroke-width="1.5"/></svg>
<div class="t" id="rI" style="left:53.5px;top:253px;font-size:13px;line-height:16px;color:#1a1a1a;-webkit-text-stroke:0.42px currentColor;">I</div>
<div class="t" id="m1" style="left:174px;top:253px;font-size:13px;line-height:16px;color:#1a1a1a;-webkit-text-stroke:0.42px currentColor;letter-spacing:-0.107px;">Đối với công chức, viên chức</div>
<svg class="a" style="left:69px;top:287px" width="14" height="14" viewBox="0 0 14 14" ><rect x="0.75" y="0.75" width="12.5" height="12.5" rx="2" fill="none" stroke="#707070" stroke-width="1.6"/><path d="M4.4 7h5.2" stroke="#606060" stroke-width="1.5"/></svg>
<div class="t" style="left:89px;top:286px;font-size:13px;line-height:16px;color:#1a1a1a;-webkit-text-stroke:0.42px currentColor;">1</div>
<div class="t" style="left:174px;top:286px;font-size:13px;line-height:16px;color:#1a1a1a;-webkit-text-stroke:0.42px currentColor;">1</div>
<div class="t" style="left:113px;top:319px;font-size:13px;line-height:16px;color:#1f1f1f;">1</div>
<div class="t" id="m3" style="left:174px;top:319px;font-size:13px;line-height:16px;color:#1f1f1f;letter-spacing:-0.281px;">Lê Hữu Hạnh</div>
<div class="t" id="shcb" style="left:647px;top:319px;font-size:13px;line-height:16px;color:#1f1f1f;letter-spacing:-0.596px;">SHCB01</div>
<div class="t" id="vc" style="left:787px;top:319px;font-size:13px;line-height:16px;color:#1f1f1f;letter-spacing:-0.116px;">Viên chức</div>
<div class="t" style="left:113px;top:352px;font-size:13px;line-height:16px;color:#1f1f1f;">2</div>
<div class="t" style="left:174px;top:352px;font-size:13px;line-height:16px;color:#1f1f1f;letter-spacing:-0.266px;">Lê Thanh Bình</div>
<div class="t" style="left:647px;top:352px;font-size:13px;line-height:16px;color:#1f1f1f;letter-spacing:-0.463px;">SHCB02</div>
<div class="t" style="left:787px;top:352px;font-size:13px;line-height:16px;color:#1f1f1f;letter-spacing:-0.116px;">Viên chức</div>
<div class="t" style="left:33px;top:385px;font-size:13px;line-height:16px;color:#1a1a1a;-webkit-text-stroke:0.42px currentColor;">II</div>
<div class="t" id="m5" style="left:174px;top:385px;font-size:13px;line-height:16px;color:#1a1a1a;-webkit-text-stroke:0.42px currentColor;letter-spacing:-0.054px;">Đối với lao động hợp đồng thực hiện công việc hỗ trợ, phục vụ theo Nghị định...</div>
<div class="t" style="left:33px;top:418px;font-size:13px;line-height:16px;color:#1a1a1a;-webkit-text-stroke:0.42px currentColor;">III</div>
<div class="t" id="m6" style="left:174px;top:418px;font-size:13px;line-height:16px;color:#1a1a1a;-webkit-text-stroke:0.42px currentColor;letter-spacing:-0.086px;">Đối với hợp đồng thực hiện công việc chuyên môn, nghiệp vụ trong đơn vị sự ...</div>
<svg class="a" style="left:937px;top:253px" width="16" height="16" viewBox="0 0 16 16" fill="none" stroke="#a9a6a9" stroke-width="1.35" stroke-linecap="butt"><circle cx="6.6" cy="4.2" r="2.85"/><path d="M2.7 13.9V13a3.5 3.5 0 0 1 3.5-3.5h4.1"/><path d="M11.5 9.7v5M9 12.2h5"/></svg>
<svg class="a" style="left:969.5px;top:258.5px" width="15" height="4" viewBox="0 0 15 4" fill="#666"><circle cx="2" cy="2" r="1.4"/><circle cx="7.5" cy="2" r="1.4"/><circle cx="13" cy="2" r="1.4"/></svg>
<svg class="a" style="left:937px;top:286px" width="16" height="16" viewBox="0 0 16 16" fill="none" stroke="#5c5c5c" stroke-width="1.35" stroke-linecap="butt"><circle cx="6.6" cy="4.2" r="2.85"/><path d="M2.7 13.9V13a3.5 3.5 0 0 1 3.5-3.5h4.1"/><path d="M11.5 9.7v5M9 12.2h5"/></svg>
<svg class="a" style="left:969.5px;top:291.5px" width="15" height="4" viewBox="0 0 15 4" fill="#666"><circle cx="2" cy="2" r="1.4"/><circle cx="7.5" cy="2" r="1.4"/><circle cx="13" cy="2" r="1.4"/></svg>
<svg class="a" style="left:971px;top:321px" width="12" height="12" viewBox="0 0 12 12" fill="none" stroke="#f23a3a" stroke-width="1.4" stroke-linecap="round"><path d="M1.8 1.8l8.4 8.4M10.2 1.8l-8.4 8.4"/></svg>
<svg class="a" style="left:971px;top:354px" width="12" height="12" viewBox="0 0 12 12" fill="none" stroke="#f23a3a" stroke-width="1.4" stroke-linecap="round"><path d="M1.8 1.8l8.4 8.4M10.2 1.8l-8.4 8.4"/></svg>
<svg class="a" style="left:937px;top:385px" width="16" height="16" viewBox="0 0 16 16" fill="none" stroke="#5c5c5c" stroke-width="1.35" stroke-linecap="butt"><circle cx="6.6" cy="4.2" r="2.85"/><path d="M2.7 13.9V13a3.5 3.5 0 0 1 3.5-3.5h4.1"/><path d="M11.5 9.7v5M9 12.2h5"/></svg>
<svg class="a" style="left:969.5px;top:390.5px" width="15" height="4" viewBox="0 0 15 4" fill="#666"><circle cx="2" cy="2" r="1.4"/><circle cx="7.5" cy="2" r="1.4"/><circle cx="13" cy="2" r="1.4"/></svg>
<svg class="a" style="left:937px;top:418px" width="16" height="16" viewBox="0 0 16 16" fill="none" stroke="#5c5c5c" stroke-width="1.35" stroke-linecap="butt"><circle cx="6.6" cy="4.2" r="2.85"/><path d="M2.7 13.9V13a3.5 3.5 0 0 1 3.5-3.5h4.1"/><path d="M11.5 9.7v5M9 12.2h5"/></svg>
<svg class="a" style="left:969.5px;top:423.5px" width="15" height="4" viewBox="0 0 15 4" fill="#666"><circle cx="2" cy="2" r="1.4"/><circle cx="7.5" cy="2" r="1.4"/><circle cx="13" cy="2" r="1.4"/></svg>
<svg class="a" style="left:723px;top:159px" width="285" height="44" viewBox="0 0 285 44" ><rect x="2.0" y="2.0" width="281" height="40" fill="none" stroke="#f74040" stroke-width="4"/></svg>
<svg class="a" style="left:918.2px;top:278.2px" width="55.799999999999955" height="30.599999999999966" viewBox="0 0 55.799999999999955 30.599999999999966" ><rect x="1.8" y="1.8" width="52.2" height="27.0" fill="#fff" stroke="#f74040" stroke-width="3.6"/></svg>
<svg class="a" style="left:937px;top:286px" width="16" height="16" viewBox="0 0 16 16" fill="none" stroke="#5c5c5c" stroke-width="1.35" stroke-linecap="butt"><circle cx="6.6" cy="4.2" r="2.85"/><path d="M2.7 13.9V13a3.5 3.5 0 0 1 3.5-3.5h4.1"/><path d="M11.5 9.7v5M9 12.2h5"/></svg>
<svg class="a" style="left:949px;top:344px" width="48.799999999999955" height="29" viewBox="0 0 48.799999999999955 29" ><rect x="1.8" y="1.8" width="45.2" height="25.4" fill="#fff" stroke="#f74040" stroke-width="3.6"/></svg>
<svg class="a" style="left:971px;top:354px" width="12" height="12" viewBox="0 0 12 12" fill="none" stroke="#f23a3a" stroke-width="1.4" stroke-linecap="round"><path d="M1.8 1.8l8.4 8.4M10.2 1.8l-8.4 8.4"/></svg>
<div style="left:680px;top:141.5px;width:40px;height:40px;border-radius:50%;background:#f74040;box-shadow:1px 3px 5px rgba(0,0,0,0.35);"><div class="t" id="b2" style="left:0;top:0;width:40px;height:40px;line-height:40px;text-align:center;color:#fff;font-size:30px;-webkit-text-stroke:0.2px #fff;">2</div></div>
<div style="left:890px;top:292px;width:40px;height:40px;border-radius:50%;background:#f74040;box-shadow:1px 3px 5px rgba(0,0,0,0.35);"><div class="t"  style="left:0;top:0;width:40px;height:40px;line-height:40px;text-align:center;color:#fff;font-size:30px;-webkit-text-stroke:0.2px #fff;clip-path:polygon(0 0,40px 0,40px 26.5px,22.6px 26.5px,22.6px 40px,18.4px 40px,18.4px 26.5px,0 26.5px);left:1px;">1</div></div>
<div style="left:918px;top:341px;width:40px;height:40px;border-radius:50%;background:#f74040;box-shadow:1px 3px 5px rgba(0,0,0,0.35);"><div class="t"  style="left:0;top:0;width:40px;height:40px;line-height:40px;text-align:center;color:#fff;font-size:30px;-webkit-text-stroke:0.2px #fff;">3</div></div>
<div style="left:0px;top:467px;width:1024px;height:49px;background:#f4f4f4;"></div>
<div style="left:832px;top:477px;width:78px;height:26px;border:1px solid #d0d0d0;border-radius:4px;background:#fff;"></div>
<div class="t" id="huy2" style="left:832px;top:483px;width:80px;text-align:center;font-size:13px;line-height:16px;color:#1f1f1f;-webkit-text-stroke:0.25px currentColor;letter-spacing:-0.117px;">Hủy bỏ</div>
<div style="left:920px;top:477px;width:80px;height:28px;border-radius:4px;background:#12aa1a;"></div>
<div class="t" id="dongy" style="left:920px;top:483px;width:80px;text-align:center;font-size:13px;line-height:16px;color:#fff;-webkit-text-stroke:0.6px #fff;letter-spacing:-0.117px;">Đồng ý</div>
</div>
</body></html>
